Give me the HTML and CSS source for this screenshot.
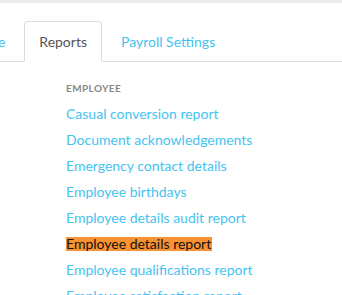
FILE: index.html
```html
<!DOCTYPE html>
<html lang="en">
<head>
  <meta charset="UTF-8">
  <title>Reports</title>
  <link rel="stylesheet" href="styles.css">
</head>
<body>

<div class="topbar"></div>

<ul class="tabs">
  <li class="tab"><a href="#">Leave</a></li>
  <li class="tab active"><a href="#">Reports</a></li>
  <li class="tab"><a href="#">Payroll Settings</a></li>
</ul>

<div class="report-group">
  <h4>Employee</h4>
  <ul class="report-list">
    <li><a href="#">Casual conversion report</a></li>
    <li><a href="#">Document acknowledgements</a></li>
    <li><a href="#">Emergency contact details</a></li>
    <li><a href="#">Employee birthdays</a></li>
    <li><a href="#">Employee details audit report</a></li>
    <li><a href="#" class="highlight">Employee details report</a></li>
    <li><a href="#">Employee qualifications report</a></li>
    <li><a href="#">Employee satisfaction report</a></li>
  </ul>
</div>

</body>
</html>
```

FILE: styles.css
```css
body {
  margin: 0;
  font-family: Lato, "Open Sans", sans-serif;
  background: #fff;
  overflow: hidden;
}
a {
  text-decoration: none;
  color: #45c3f0;
}
.topbar {
  height: 3px;
  background: #ececec;
}
.tabs {
  list-style: none;
  margin: 18px 0 0 -45px;
  padding: 0;
  display: flex;
  border-bottom: 1px solid #dddddd;
}
.tab {
  margin-right: 4px;
  margin-bottom: -1px;
  border: 1px solid transparent;
  border-radius: 4px 4px 0 0;
}
.tab a {
  display: block;
  padding: 0 14px;
  line-height: 39px;
  font-size: 14px;
}
.tab.active {
  border-color: #dddddd;
  border-bottom-color: #fff;
  background: #fff;
}
.tab.active a {
  color: #555;
}
.report-group {
  padding: 20px 0 0 66px;
}
.report-group h4 {
  margin: 0 0 7px;
  font-size: 10px;
  text-transform: uppercase;
  color: #888;
  letter-spacing: 0.4px;
}
.report-list {
  list-style: none;
  margin: 0;
  padding: 0;
}
.report-list li {
  line-height: 26px;
  font-size: 14px;
}
.highlight {
  display: inline-block;
  line-height: 14px;
  padding: 0 1px 0 0;
  background: #f89232;
  color: #111 !important;
}
```
